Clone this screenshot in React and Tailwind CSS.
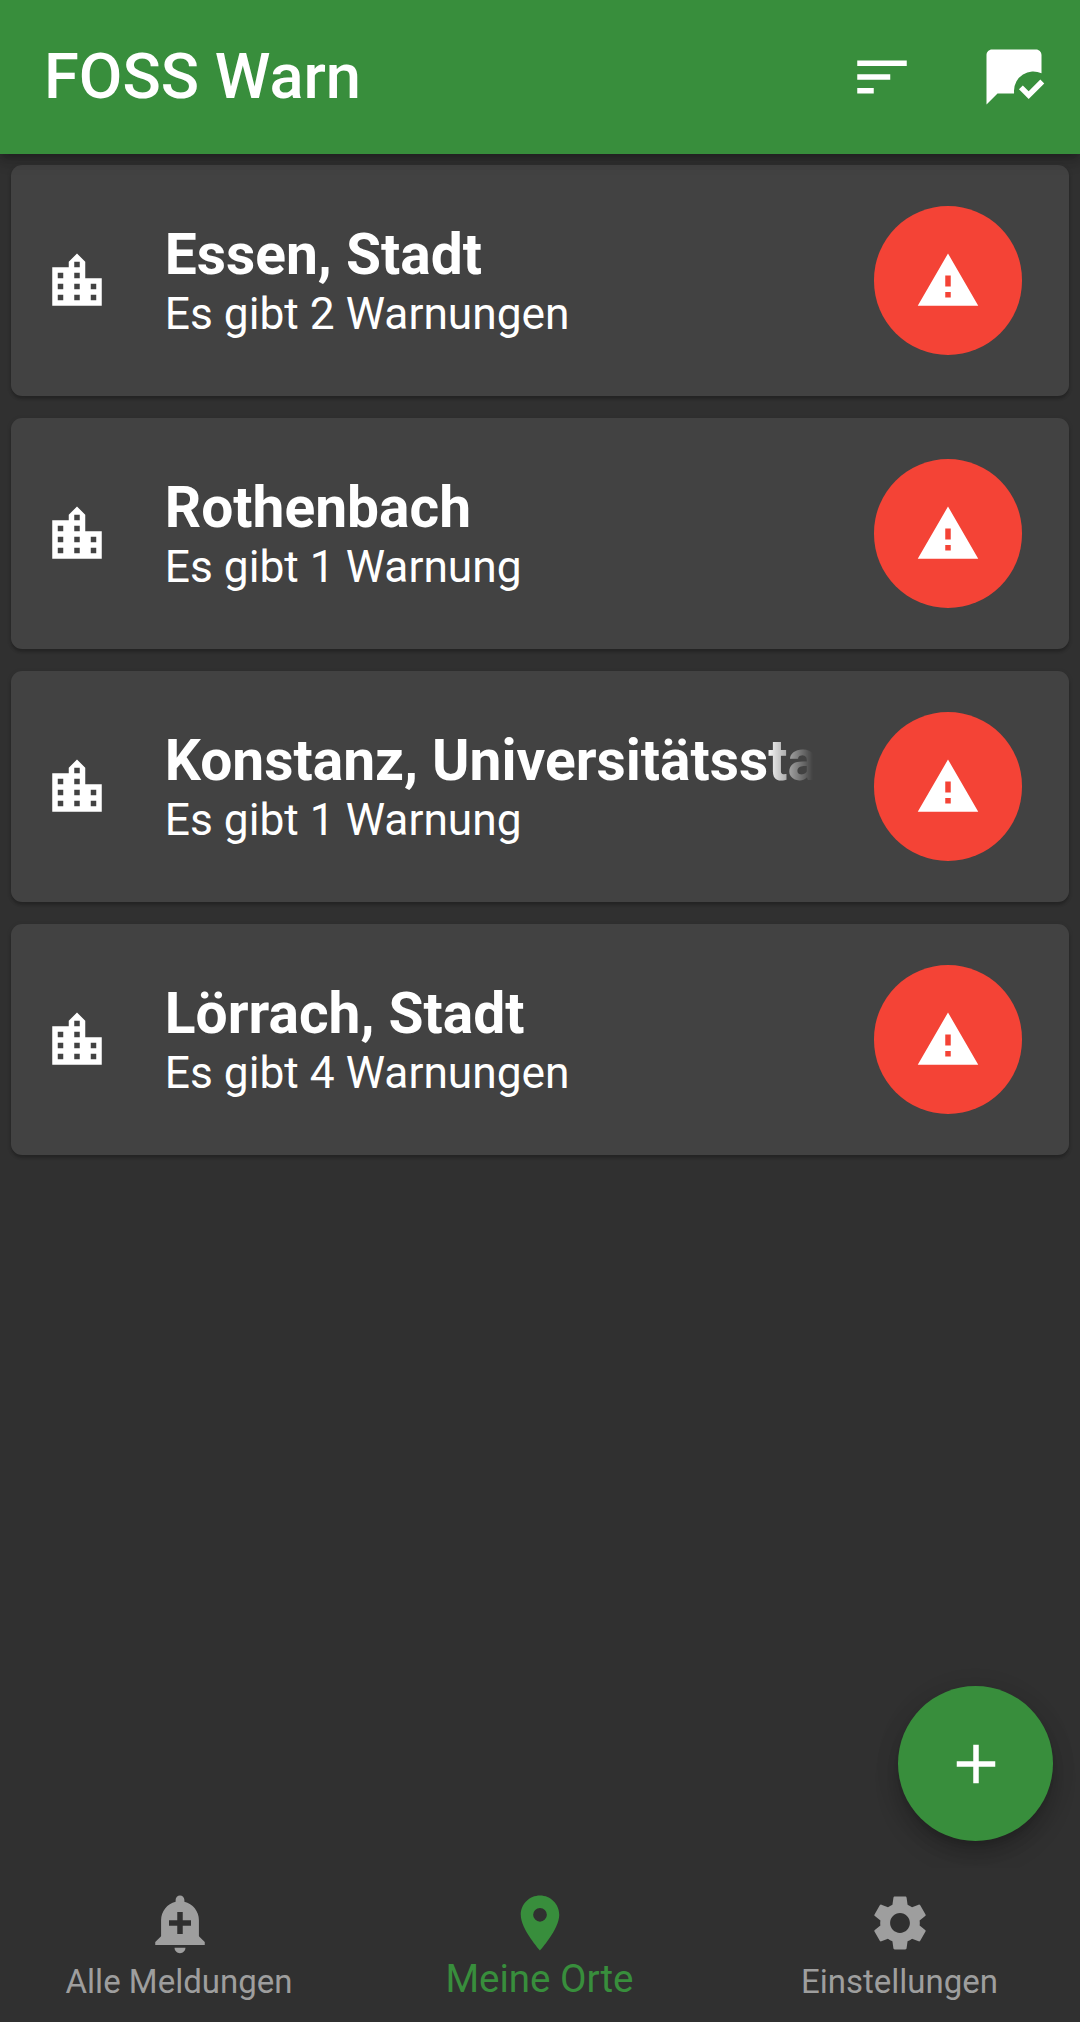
import {
  MdSort,
  MdMarkChatRead,
  MdLocationCity,
  MdAdd,
  MdAddAlert,
  MdPlace,
} from "react-icons/md";

const places = [
  { name: "Essen, Stadt", status: "Es gibt 2 Warnungen" },
  { name: "Rothenbach", status: "Es gibt 1 Warnung" },
  { name: "Konstanz, Universitätsstadt", status: "Es gibt 1 Warnung", fade: true },
  { name: "Lörrach, Stadt", status: "Es gibt 4 Warnungen" },
];

function WarningIcon() {
  return (
    <svg viewBox="0 0 24 24" fill="currentColor" className="size-[66px]">
      <path d="M1 21h22L12 2 1 21zm12-3h-2v-2h2v2zm0-4h-2v-4h2v4z" />
    </svg>
  );
}

function SettingsIcon() {
  return (
    <svg viewBox="0 0 24 24" fill="currentColor" className="size-[66px]">
      <path d="M19.14 12.94c.04-.3.06-.61.06-.94 0-.32-.02-.64-.07-.94l2.03-1.58c.18-.14.23-.41.12-.61l-1.92-3.32c-.12-.22-.37-.29-.59-.22l-2.39.96c-.5-.38-1.03-.7-1.62-.94l-.36-2.54c-.04-.24-.24-.41-.48-.41h-3.84c-.24 0-.43.17-.47.41l-.36 2.54c-.59.24-1.13.57-1.62.94l-2.39-.96c-.22-.08-.47 0-.59.22L2.74 8.87c-.12.21-.08.47.12.61l2.03 1.58c-.05.3-.09.63-.09.94s.02.64.07.94l-2.03 1.58c-.18.14-.23.41-.12.61l1.92 3.32c.12.22.37.29.59.22l2.39-.96c.5.38 1.03.7 1.62.94l.36 2.54c.05.24.24.41.48.41h3.84c.24 0 .44-.17.47-.41l.36-2.54c.59-.24 1.13-.56 1.62-.94l2.39.96c.22.08.47 0 .59-.22l1.92-3.32c.12-.22.07-.47-.12-.61l-2.01-1.58zM12 15.6c-1.98 0-3.6-1.62-3.6-3.6s1.62-3.6 3.6-3.6 3.6 1.62 3.6 3.6-1.62 3.6-3.6 3.6z" />
    </svg>
  );
}

function PlaceCard({ name, status, fade }) {
  return (
    <li className="flex h-[231px] items-center rounded-[11px] bg-[#424242] pr-[47px] pl-[33px] shadow-[0_3px_3px_rgba(0,0,0,0.2),0_1px_5px_rgba(0,0,0,0.1)]">
      <MdLocationCity className="size-[66px] shrink-0" />
      <div className="ml-[54.8px] w-[648px] shrink-0 pt-[2px]">
        <div
          className={
            fade
              ? "overflow-hidden text-[56.9px] leading-[66.7px] font-bold whitespace-nowrap [mask-image:linear-gradient(to_right,black_calc(100%-47px),transparent)]"
              : "overflow-hidden text-[56.9px] leading-[66.7px] font-bold whitespace-nowrap"
          }
        >
          {name}
        </div>
        <div className="text-[44.3px] leading-[51.9px] whitespace-nowrap">{status}</div>
      </div>
      <button className="ml-auto flex size-[148.5px] shrink-0 items-center justify-center rounded-full bg-[#f44336]">
        <WarningIcon />
      </button>
    </li>
  );
}

export default function App() {
  return (
    <div className="flex h-[2022px] w-[1080px] flex-col overflow-hidden bg-[#303030] font-[Roboto,sans-serif] text-white">
      <header className="relative z-10 flex h-[154px] shrink-0 items-center justify-between bg-[#388e3c] pr-[33px] pl-[44px] shadow-[0_5px_7px_-2px_rgba(0,0,0,0.2),0_8px_14px_rgba(0,0,0,0.12),0_2px_16px_rgba(0,0,0,0.08)]">
        <h1 className="pb-[2px] text-[63.25px] leading-[74px] font-medium whitespace-nowrap">FOSS Warn</h1>
        <div className="flex gap-[66px]">
          <button>
            <MdSort className="size-[66px]" />
          </button>
          <button>
            <MdMarkChatRead className="size-[66px]" />
          </button>
        </div>
      </header>

      <main className="relative flex-1">
        <ul className="flex flex-col gap-[22px] p-[11px]">
          {places.map((place) => (
            <PlaceCard key={place.name} {...place} />
          ))}
        </ul>
        <button className="absolute right-[27px] bottom-[27px] flex size-[155px] items-center justify-center rounded-full bg-[#388e3c] shadow-[0_8px_14px_-3px_rgba(0,0,0,0.18),0_14px_26px_rgba(0,0,0,0.14),0_3px_30px_rgba(0,0,0,0.06)]">
          <MdAdd className="size-[66px]" />
        </button>
      </main>

      <nav className="relative grid h-[154px] shrink-0 grid-cols-3 bg-[#303030] pt-[22px] text-[#9e9e9e]">
        <a className="flex flex-col items-center">
          <MdAddAlert className="size-[66px]" />
          <span className="mt-[3px] pr-[2px] text-[33px] leading-[45px]">Alle Meldungen</span>
        </a>
        <a className="flex flex-col items-center text-[#388e3c]">
          <MdPlace className="size-[66px]" />
          <span className="pr-[1px] text-[38.5px] leading-[45px]">Meine Orte</span>
        </a>
        <a className="flex flex-col items-center">
          <SettingsIcon />
          <span className="mt-[3px] pr-[1px] text-[33px] leading-[45px]">Einstellungen</span>
        </a>
      </nav>
    </div>
  );
}
